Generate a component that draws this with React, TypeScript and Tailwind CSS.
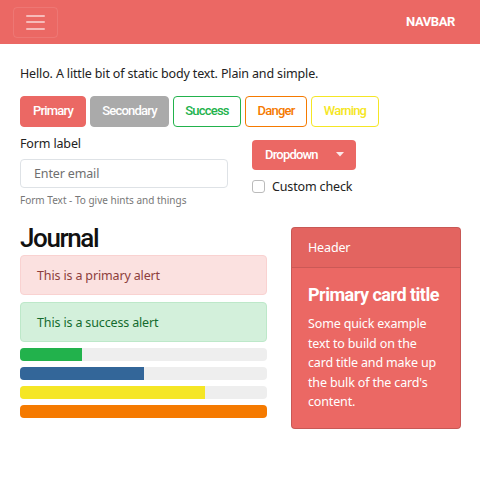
const body = { fontFamily: '"Noto Sans", "Open Sans", sans-serif' };
const head = { fontFamily: 'Roboto, "Liberation Sans", sans-serif' };

const buttons = [
  { label: "Primary", cls: "w-[66px] bg-[#eb6864] border-[#eb6864] text-white" },
  { label: "Secondary", cls: "w-[79px] bg-[#aaaaaa] border-[#aaaaaa] text-white" },
  { label: "Success", cls: "w-[68px] bg-white border-[#22b24c] text-[#22b24c]" },
  { label: "Danger", cls: "w-[62px] bg-white border-[#f57a00] text-[#f57a00]" },
  { label: "Warning", cls: "w-[68px] bg-white border-[#f5e625] text-[#f5e625]" },
];

const bars = [
  { color: "bg-[#22b24c]", value: 25 },
  { color: "bg-[#336699]", value: 50 },
  { color: "bg-[#f5e625]", value: 75 },
  { color: "bg-[#f57a00]", value: 100 },
];

export default function App() {
  return (
    <div className="w-[480px] h-[486px] bg-white text-[#222] text-[12.5px] leading-[19.5px] tracking-[-0.15px]" style={body}>
      {/* Navbar */}
      <nav className="h-[44px] bg-[#eb6864] flex items-center justify-between pl-[13px] pr-[25px]">
        <button className="w-[45px] h-[31px] border border-white/10 rounded-[4px] flex flex-col items-center justify-center gap-[4.5px]">
          <span className="block w-[19px] h-[2px] bg-white/55 rounded" />
          <span className="block w-[19px] h-[2px] bg-white/55 rounded" />
          <span className="block w-[19px] h-[2px] bg-white/55 rounded" />
        </button>
        <span className="text-white font-bold text-[13px] tracking-[-0.4px]" style={head}>
          NAVBAR
        </span>
      </nav>

      <main className="px-[20px] pt-[20px]">
        <p>Hello. A little bit of static body text. Plain and simple.</p>

        <div className="flex gap-[4px] mt-[12px]">
          {buttons.map((b) => (
            <button
              key={b.label}
              className={`h-[31px] border rounded-[4px] text-[13px] font-medium tracking-[-0.8px] ${b.cls}`}
              style={head}
            >
              {b.label}
            </button>
          ))}
        </div>

        {/* Form row */}
        <div className="grid grid-cols-2 gap-x-[24px] mt-[7px] w-[440px]">
          <div>
            <label className="block">Form label</label>
            <input
              className="mt-[6px] w-[208px] h-[29px] border border-[#dee2e6] rounded-[4px] px-[13px] text-[12.5px] placeholder:text-[#6f6f6f] outline-none"
              placeholder="Enter email"
              style={body}
            />
            <div className="mt-[5px] text-[10px] leading-[15px] text-[#777] tracking-normal">Form Text - To give hints and things</div>
          </div>
          <div className="pt-[6px]">
            <button
              className="h-[30px] w-[104px] bg-[#eb6864] rounded-[4px] text-white flex items-center pl-[13px] pr-[10px] justify-between text-[13px] font-medium tracking-[-0.8px]"
              style={head}
            >
              Dropdown
              <svg width="8" height="5" viewBox="0 0 8 5" className="mr-[2px]">
                <path d="M0 0h8L4 4.5z" fill="white" fillOpacity="0.85" />
              </svg>
            </button>
            <label className="flex items-center gap-[7px] mt-[7px]">
              <span className="w-[13px] h-[13px] border border-[#bbb] rounded-[3px] bg-white" />
              <span>Custom check</span>
            </label>
          </div>
        </div>

        {/* Lower row */}
        <div className="grid grid-cols-[247px_170px] gap-x-[24px] mt-[15px]">
          <div>
            <h3 className="text-[26px] leading-[31px] font-medium tracking-[-1.4px] text-[#111]" style={head}>
              Journal
            </h3>
            <div className="mt-[1px] h-[40px] flex items-center px-[16px] pt-[1px] bg-[#fbe1e0] border border-[#f9d2d1] rounded-[4px] text-[#8d3e3c]">
              This is a primary alert
            </div>
            <div className="mt-[7px] h-[40px] flex items-center px-[16px] pt-[1px] bg-[#d3f0db] border border-[#bde8c9] rounded-[4px] text-[#146b2e]">
              This is a success alert
            </div>
            <div className="mt-[6px] flex flex-col gap-[6px]">
              {bars.map((b, i) => (
                <div key={i} className="h-[13px] bg-[#eeeeee] rounded-[4px] overflow-hidden">
                  <div className={`h-full ${b.color}`} style={{ width: `${b.value}%` }} />
                </div>
              ))}
            </div>
          </div>

          <div className="mt-[4px] w-[170px] bg-[#eb6864] border border-black/15 rounded-[4px] text-white overflow-hidden">
            <div className="h-[40px] flex items-center px-[16px] bg-black/[0.03] border-b border-black/10">Header</div>
            <div className="px-[16px] pt-[16px] pb-[16px]">
              <h4 className="text-[18px] leading-[22px] font-bold tracking-[-0.5px]" style={head}>
                Primary card title
              </h4>
              <p className="mt-[8px]">
                Some quick example text to build on the card title and make up the bulk of the card's content.
              </p>
            </div>
          </div>
        </div>
      </main>
    </div>
  );
}
